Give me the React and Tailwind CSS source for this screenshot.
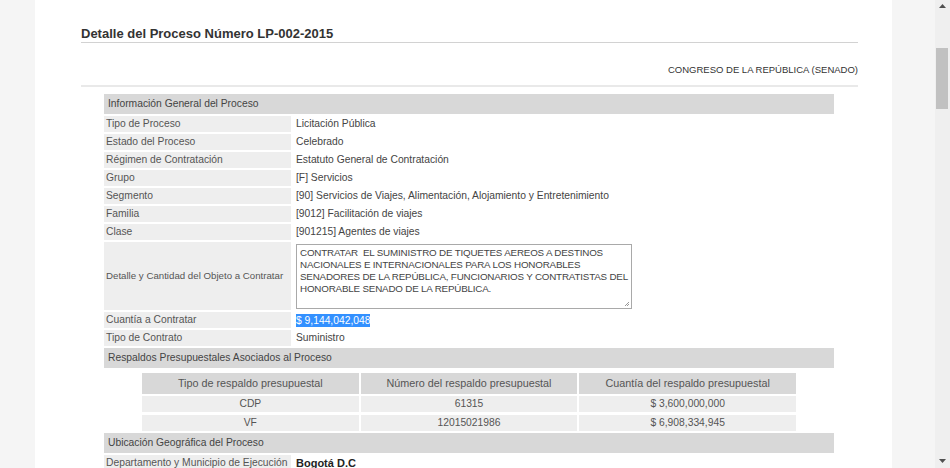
import React from 'react';

const general = [
  ['Tipo de Proceso', 'Licitación Pública'],
  ['Estado del Proceso', 'Celebrado'],
  ['Régimen de Contratación', 'Estatuto General de Contratación'],
  ['Grupo', '[F] Servicios'],
  ['Segmento', '[90] Servicios de Viajes, Alimentación, Alojamiento y Entretenimiento'],
  ['Familia', '[9012] Facilitación de viajes'],
  ['Clase', '[901215] Agentes de viajes'],
];

const respaldos = [
  ['CDP', '61315', '$ 3,600,000,000'],
  ['VF', '12015021986', '$ 6,908,334,945'],
];

const objeto = [
  'CONTRATAR\u00a0 EL SUMINISTRO DE TIQUETES AEREOS A DESTINOS',
  'NACIONALES E INTERNACIONALES PARA LOS HONORABLES',
  'SENADORES DE LA REPÚBLICA, FUNCIONARIOS Y CONTRATISTAS DEL',
  'HONORABLE SENADO DE LA REPÚBLICA.',
];

function Section({ children }) {
  return <div className="h-[20px] bg-[#d8d8d8] px-[4px] leading-[20px] text-[#444]">{children}</div>;
}

function Row({ label, children, tall }) {
  return (
    <div className="flex gap-[2px]">
      <div className={`flex w-[187px] shrink-0 items-center whitespace-nowrap bg-[#eeeeee] px-[2px] text-[#555] ${tall ? 'h-[68px] text-[9.7px]' : 'h-[16px]'}`}>{label}</div>
      <div className="flex flex-1 items-center px-[3px] text-[#444]">{children}</div>
    </div>
  );
}

export default function App() {
  return (
    <div className="flex h-[468px] overflow-hidden bg-[#f5f5f5] text-[10.3px]" style={{ fontFamily: '"Liberation Sans", Arial, sans-serif' }}>
      <div className="w-[35px] shrink-0" />
      <main className="w-[857px] shrink-0 bg-white pl-[46px] pr-[34px] pt-[27px]">
        <h1 className="border-b border-[#d2d2d2] pb-[1px] text-[13px] font-bold leading-[14px] text-[#333]">Detalle del Proceso Número LP-002-2015</h1>
        <div className="flex h-[44px] items-center justify-end border-b-2 border-[#e9e9e9] pt-[13px] pb-[1px] text-[9.5px] text-[#333]">
          CONGRESO DE LA REPÚBLICA (SENADO)
        </div>
        <div className="ml-[23px] mr-[24px] mt-[7px] flex flex-col gap-[2px]">
          <Section>Información General del Proceso</Section>
          {general.map(([l, v]) => (
            <Row key={l} label={l}>{v}</Row>
          ))}
          <Row label="Detalle y Cantidad del Objeto a Contratar" tall>
            <div className="relative h-[65px] w-[336px] overflow-hidden whitespace-nowrap border border-[#a9a9a9] pl-[3px] pt-[2px] text-[9.8px] leading-[12px] tracking-[-0.18px] text-[#444]">
              {objeto.map((l) => (
                <div key={l}>{l}</div>
              ))}
              <svg className="absolute bottom-[1px] right-[1px]" width="6" height="6" viewBox="0 0 6 6">
                <path d="M5 1 L1 5 M5 3 L3 5" stroke="#999" strokeWidth="1" />
              </svg>
            </div>
          </Row>
          <Row label="Cuantía a Contratar">
            <span className="bg-[#3390ff] leading-[13px] text-white">$ 9,144,042,048</span>
          </Row>
          <Row label="Tipo de Contrato">Suministro</Row>
          <Section>Respaldos Presupuestales Asociados al Proceso</Section>
          <div className="flex h-[61px] justify-start pl-[38px] pt-[3px]">
            <div className="grid w-[654px] grid-cols-3 gap-[2px] text-center text-[#555]">
              <div className="h-[21px] bg-[#d8d8d8] text-[10.8px] leading-[21px]">Tipo de respaldo presupuestal</div>
              <div className="h-[21px] bg-[#d8d8d8] text-[10.8px] leading-[21px]">Número del respaldo presupuestal</div>
              <div className="h-[21px] bg-[#d8d8d8] text-[10.8px] leading-[21px]">Cuantía del respaldo presupuestal</div>
              {respaldos.map((r) =>
                r.map((c, i) => (
                  <div key={r[0] + i} className="h-[16px] bg-[#eeeeee] leading-[16px]">{c}</div>
                ))
              )}
            </div>
          </div>
          <Section>Ubicación Geográfica del Proceso</Section>
          <Row label="Departamento y Municipio de Ejecución">
            <span className="text-[11px] font-bold text-[#222]">Bogotá D.C</span>
          </Row>
        </div>
      </main>
      <div className="w-[43px] shrink-0" />
      <div className="relative w-[15px] shrink-0 bg-[#efefef]">
        <svg className="absolute left-[4px] top-[4px]" width="7" height="4" viewBox="0 0 7 4">
          <path d="M3.5 0 L7 4 L0 4 Z" fill="#505050" />
        </svg>
        <div className="absolute left-[1px] top-[48px] h-[61px] w-[12px] bg-[#c1c1c1]" />
        <svg className="absolute bottom-[5px] left-[4px]" width="7" height="4" viewBox="0 0 7 4">
          <path d="M0 0 L7 0 L3.5 4 Z" fill="#505050" />
        </svg>
      </div>
    </div>
  );
}
